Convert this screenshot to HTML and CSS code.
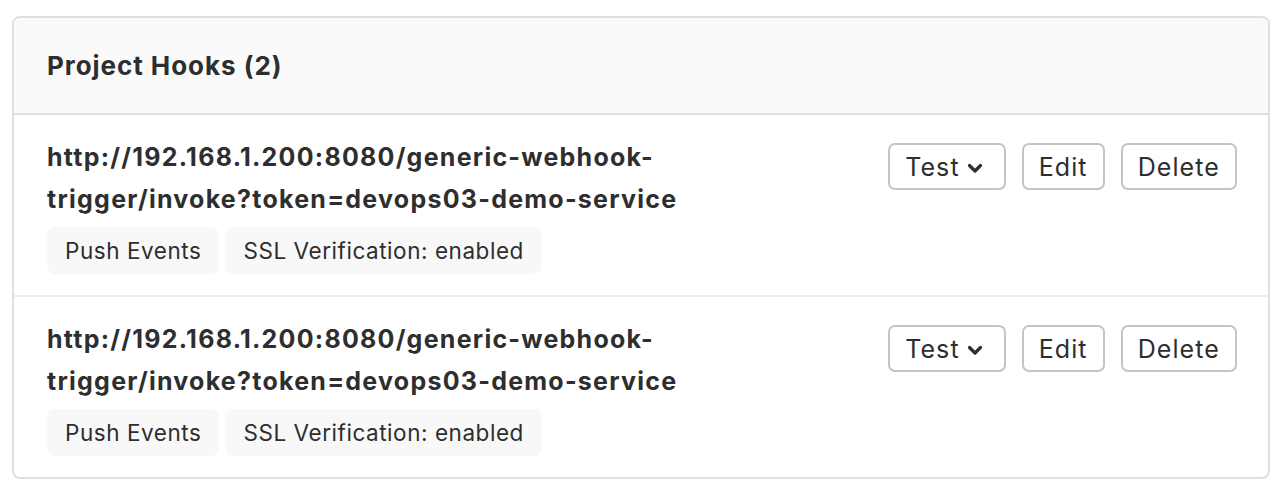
FILE: index.html
```html
<!DOCTYPE html>
<html>
<head>
<meta charset="utf-8">
<link rel="stylesheet" href="styles.css">
</head>
<body>
<div class="panel">
  <div class="panel-header">Project Hooks (2)</div>
  <ul class="hook-list">
    <li class="hook">
      <div class="hook-info">
        <div class="hook-url">http://192.168.1.200:8080/generic-webhook-<br>trigger/invoke?token=devops03-demo-service</div>
        <div class="badges">
          <span class="badge">Push Events</span>
          <span class="badge">SSL Verification: enabled</span>
        </div>
      </div>
      <div class="actions">
        <button class="btn btn-test">Test<svg class="chev" viewBox="0 0 16 11" width="16" height="11"><path d="M2.5 2.5 L8 8 L13.5 2.5" fill="none" stroke="#2e2e2e" stroke-width="3.2" stroke-linecap="round" stroke-linejoin="round"/></svg></button>
        <button class="btn">Edit</button>
        <button class="btn">Delete</button>
      </div>
    </li>
    <li class="hook">
      <div class="hook-info">
        <div class="hook-url">http://192.168.1.200:8080/generic-webhook-<br>trigger/invoke?token=devops03-demo-service</div>
        <div class="badges">
          <span class="badge">Push Events</span>
          <span class="badge">SSL Verification: enabled</span>
        </div>
      </div>
      <div class="actions">
        <button class="btn btn-test">Test<svg class="chev" viewBox="0 0 16 11" width="16" height="11"><path d="M2.5 2.5 L8 8 L13.5 2.5" fill="none" stroke="#2e2e2e" stroke-width="3.2" stroke-linecap="round" stroke-linejoin="round"/></svg></button>
        <button class="btn">Edit</button>
        <button class="btn">Delete</button>
      </div>
    </li>
  </ul>
</div>
</body>
</html>
```
FILE: styles.css
```css
html, body {
  margin: 0;
  padding: 0;
  background: #ffffff;
}
body {
  font-family: Inter, "Liberation Sans", sans-serif;
  color: #2e2e2e;
}
.panel {
  margin: 16px 10px 0 12px;
  border: 2px solid #e0e0e0;
  border-radius: 8px;
  overflow: hidden;
}
.panel-header {
  background: #fafafa;
  height: 97px;
  box-sizing: border-box;
  padding: 0 33px;
  display: flex;
  align-items: center;
  font-size: 26px;
  letter-spacing: 0.95px;
  font-weight: 700;
  border-bottom: 2px solid #e0e0e0;
}
.hook-list {
  list-style: none;
  margin: 0;
  padding: 0;
}
.hook {
  display: flex;
  justify-content: space-between;
  align-items: flex-start;
  padding: 21px 31px 21px 33px;
  border-bottom: 2px solid #ededed;
}
.hook:last-child {
  border-bottom: none;
}
.hook-url {
  font-size: 25px;
  font-weight: 700;
  letter-spacing: 1.25px;
  line-height: 42px;
}
.badges {
  display: flex;
  gap: 6px;
  margin-top: 7px;
}
.badge {
  background: #f8f8f8;
  border-radius: 8px;
  height: 47px;
  padding: 0 18px;
  display: flex;
  align-items: center;
  font-size: 22.5px;
  letter-spacing: 0.55px;
}
.actions {
  display: flex;
  gap: 16px;
  margin-top: 7px;
}
.btn {
  font-family: inherit;
  color: #2e2e2e;
  background: #ffffff;
  border: 2px solid #c4c4c4;
  border-radius: 7px;
  height: 47px;
  padding: 0 15px;
  font-size: 25px;
  letter-spacing: 1.1px;
  display: flex;
  align-items: center;
}
.btn-test {
  padding-right: 21px;
}
.chev {
  display: block;
  margin-left: 7px;
  margin-top: 4px;
}
```
